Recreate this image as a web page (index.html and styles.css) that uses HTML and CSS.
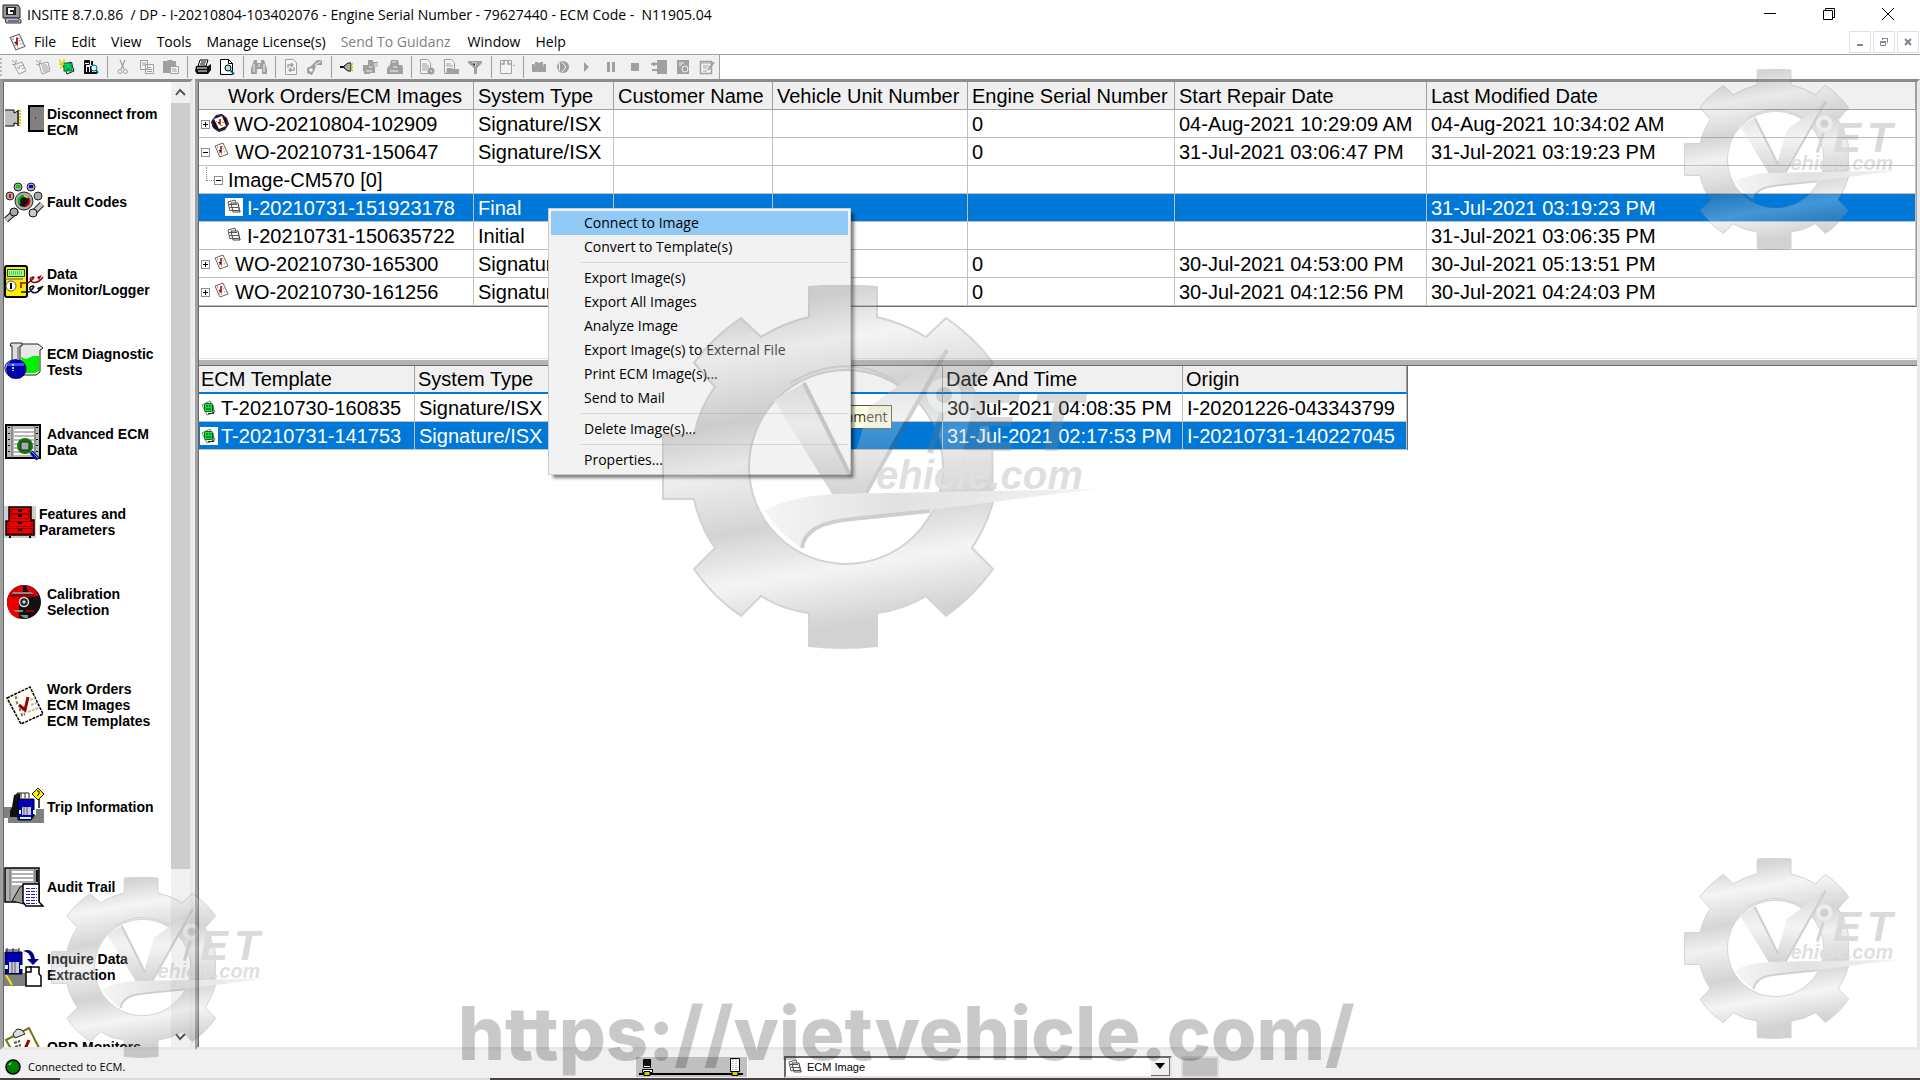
FILE: index.html
```html
<!DOCTYPE html>
<html lang="en">
<head>
<meta charset="utf-8">
<title>INSITE 8.7.0.86</title>
<link rel="stylesheet" href="styles.css">
</head>
<body>
<svg class="defs" width="0" height="0" aria-hidden="true">
  <defs>
    <linearGradient id="steel" x1="0" y1="0" x2="0.15" y2="1">
      <stop offset="0" stop-color="#707070"/><stop offset=".1" stop-color="#7a7a7a"/><stop offset=".22" stop-color="#dedede"/>
      <stop offset=".4" stop-color="#787878"/><stop offset=".52" stop-color="#d2d2d2"/><stop offset=".7" stop-color="#727272"/>
      <stop offset=".84" stop-color="#dedede"/><stop offset="1" stop-color="#6c6c6c"/>
    </linearGradient>
    <linearGradient id="blade" x1="0" y1="0" x2="0" y2="1">
      <stop offset="0" stop-color="#808080"/><stop offset=".5" stop-color="#dadada"/><stop offset="1" stop-color="#707070"/>
    </linearGradient>
    <linearGradient id="swoosh" x1="0" y1="0" x2="1" y2="0">
      <stop offset="0" stop-color="#e0e0e0"/><stop offset=".4" stop-color="#a0a0a0"/><stop offset="1" stop-color="#d8d8d8"/>
    </linearGradient>
    <symbol id="logo" viewBox="0 0 434 364">
      <g opacity=".3">
        <path fill="url(#steel)" stroke="#707070" stroke-width="2" fill-rule="evenodd" d="M147 2Q181-1 215 2V32Q241 38 264 52L284 33Q312 52 331 78L310 102Q324 126 330 150L331 217Q324 242 310 263L331 284Q311 312 284 331L264 311Q241 325 215 328V361Q181 365 147 361V328Q121 325 99 311L79 331Q51 312 32 284L53 263Q38 242 32 214H1V150H32Q38 122 53 102L32 78Q51 52 79 33L99 52Q121 38 147 32ZM184 85A97 97 0 1 0 184 279A97 97 0 1 0 184 85Z"/>
        <path fill="url(#blade)" d="M172 212L112 115L142 98L187 190L207 122L285 65L204 208Z"/>
        <path fill="url(#swoosh)" d="M103 226Q125 212 172 209L434 204L268 225L180 233Q150 238 140 263Q118 250 103 226Z"/>
        <path fill="none" stroke="#606060" stroke-width="4" d="M142 98L189 192M285 65L204 208M268 226L190 234Q143 238 140 263"/>
        <path fill="none" stroke="#707070" stroke-width="2" d="M128 98Q185 65 235 97"/>
        <circle cx="282" cy="110" r="17" fill="#b8c4c6"/><circle cx="282" cy="110" r="8" fill="#666"/>
        <path stroke="#777" stroke-width="6" d="M280 128L268 168"/>
        <text x="300 368" y="166" class="logo-big">ET</text>
        <text x="214" y="204" class="logo-small">ehicle.com</text>
      </g>
    </symbol>
    <symbol id="note" viewBox="0 0 16 16"><path fill="#fff" stroke="#666" stroke-width="1" d="M2 4L10 1L15 12L7 15Z"/><path stroke="#888" stroke-dasharray="1 1" d="M9 5l3-1M10 7l3-1M11 10l3-1M4 6l2-1M6 11l2-1"/><path fill="none" stroke="#a00000" stroke-width="1.500" d="M6 8l2 2V4"/><path fill="#c0b000" d="M4 4h1v1H4zM8 12h1v1H8zM11 3h1v1h-1z"/></symbol>
    <symbol id="note-active" viewBox="0 0 18 18"><path fill="#111" d="M5 1l6-1 5 4 2 6-4 6-6 2-6-4-2-6z"/><path fill="none" stroke="#50206a" d="M5 2l6-1 4 3 2 6-4 5-6 2-5-4-1-6z"/><path fill="#fff" d="M3 5L11 2L15 12L8 15Z"/><path fill="none" stroke="#a00000" stroke-width="1.500" d="M7 8l2 2V5"/><path fill="#c0b000" d="M5 7h1v1H5zM11 8h2v1h-2zM10 11h2v1h-2z"/></symbol>
    <symbol id="pages" viewBox="0 0 16 16"><path fill="#fff" stroke="#555" d="M2 3L9 1L11 9L4 12Z"/><path fill="#fff" stroke="#444" d="M5 4h7l2 9H7Z"/><path stroke="#555" d="M3 5.500h8M4 8.500h8M6 11.500h7M12 6l2 7"/></symbol>
    <symbol id="template" viewBox="0 0 16 16"><path fill="#fff" stroke="#777" d="M1 5L9 1L14 12L6 15Z"/><rect x="3.500" y="3.500" width="8" height="8" rx="1" fill="#10e040" stroke="#087020"/><path stroke="#043a10" d="M5 6h2M8 6h2M5 9h5M12 5v8M7 13.500h6"/></symbol>
    <symbol id="app" viewBox="0 0 20 20"><path fill="#9a9a9a" stroke="#222" d="M1 1h15l2 3v10H1Z"/><path fill="#222" d="M4 3h10v8H4z"/><path fill="none" stroke="#fff" stroke-width="2" d="M12 5H7v4h4"/><path fill="#b9b9c8" stroke="#334" d="M3 14h12l4 2v3H4Z"/><path stroke="#225" d="M6 17h11"/></symbol>
    <symbol id="t-note" viewBox="0 0 16 16"><path fill="#f4f4f4" stroke="#a0a0a0" d="M3 6L11 3L15 12L8 15Z"/><path stroke="#a0a0a0" d="M1 1l4 4M1 5l3 1M5 1v3M6 8l2 2 1-4M10 7l3-1M11 10l2-1" fill="none"/></symbol>
    <symbol id="t-pages" viewBox="0 0 16 16"><path fill="#f4f4f4" stroke="#a0a0a0" d="M4 5l9-2 2 9-8 3Z"/><path stroke="#a0a0a0" d="M1 1l4 4M1 5l3 1M5 1v3M6 6h6M7 8h6M7 10h7M8 12h5" fill="none"/></symbol>
    <symbol id="t-template" viewBox="0 0 16 16"><path fill="#fff" stroke="#111" d="M4 6l8-3 3 9-7 3Z"/><rect x="5" y="4" width="8" height="8" fill="#00d860" stroke="#063"/><path stroke="#063" d="M7 7h1M10 7h1M7 10h4"/><path stroke="#d8d000" stroke-width="1.500" d="M0 1l5 5M0 5l4 1M5 0v4M1 9l3-2"/></symbol>
    <symbol id="t-chart" viewBox="0 0 16 16"><path fill="#fff" stroke="#111" d="M1.500 1.500h5v4h-5z"/><path stroke="#111" stroke-width="2" fill="none" d="M2 6v8h12M5 8v6M8 7v7M1 3h5M9 2v4"/><circle cx="11" cy="9" r="3" fill="#dff" stroke="#067"/><path stroke="#067" stroke-width="2" d="M13 11l2 3"/></symbol>
    <symbol id="t-cut" viewBox="0 0 16 16"><path fill="none" stroke="#a0a0a0" stroke-width="1.300" d="M5 1l4 9M10 1L6 10"/><circle cx="5" cy="12.500" r="2" fill="none" stroke="#a0a0a0"/><circle cx="10.500" cy="12.500" r="2" fill="none" stroke="#a0a0a0"/></symbol>
    <symbol id="t-copy" viewBox="0 0 16 16"><path fill="#f4f4f4" stroke="#a0a0a0" d="M1.500 1.500h7v9h-7zM6.500 5.500h8v9h-8z"/><path stroke="#a0a0a0" d="M3 4h4M3 6h3M8 8.500h4M8 10.500h5M8 12.500h5"/></symbol>
    <symbol id="t-paste" viewBox="0 0 16 16"><path fill="#a0a0a0" d="M0 2h4l1-1h4l1 1h3v12H0z"/><path fill="#f4f4f4" stroke="#a0a0a0" d="M7.500 7.500h8v7h-8z"/><path stroke="#a0a0a0" d="M9 10h4M9 12h5"/></symbol>
    <symbol id="t-print" viewBox="0 0 16 16"><path fill="#fff" stroke="#000" d="M5 1h8l-2 6H3z"/><path stroke="#000" d="M6 3h5M5 5h5"/><path fill="#111" d="M1 7h12l3-2v6l-3 4H2l-2-3z"/><path stroke="#fff" d="M2 9h10M3 12h9"/></symbol>
    <symbol id="t-preview" viewBox="0 0 16 16"><path fill="#fff" stroke="#000" d="M1.500.5h8l4 4v11h-12z"/><path fill="none" stroke="#000" d="M9.500.5v4h4"/><circle cx="9" cy="9" r="3" fill="#bde" stroke="#000"/><path stroke="#067" stroke-width="2" d="M11 11l4 4"/></symbol>
    <symbol id="t-find" viewBox="0 0 16 16"><path fill="#a0a0a0" d="M3 1h3v3h4V1h3l3 9v5h-5v-5H6v5H0v-5z"/><path stroke="#f4f4f4" d="M3 5v8M13 5v8M8 5v3"/></symbol>
    <symbol id="t-refresh" viewBox="0 0 16 16"><path fill="#f4f4f4" stroke="#a0a0a0" d="M2.500.5h8l3 3v12h-11z"/><path fill="none" stroke="#a0a0a0" stroke-width="1.300" d="M5 9V6h5M8 4l2 2-2 2M11 8v3H6M8 9l-2 2 2 2"/></symbol>
    <symbol id="t-wrench" viewBox="0 0 16 16"><path fill="#a0a0a0" d="M0 9l4-2 6-6h5v5H9l-1 4-3 6-5-2z"/><circle cx="4" cy="11" r="1.800" fill="#f4f4f4"/><path stroke="#f4f4f4" d="M8 6l6-4"/></symbol>
    <symbol id="t-plug" viewBox="0 0 16 16"><path stroke="#111" stroke-width="2" d="M1 8h5"/><path fill="#aaa" stroke="#111" d="M5 7l4-3h3v8H9L5 9z"/><path stroke="#d8d000" stroke-width="2" stroke-dasharray="2 1" d="M13 4v9"/></symbol>
    <symbol id="t-truck" viewBox="0 0 16 16"><path fill="#a0a0a0" d="M5 1h5v2h5v5h-3v6H7v1H1v-3H0V6h5z"/><path stroke="#f4f4f4" d="M11 5h4M11 7h4M6 8h3M3 12h6"/></symbol>
    <symbol id="t-disk" viewBox="0 0 16 16"><path fill="#a0a0a0" d="M4 1h7l1 5h3l1 3v6H0V9l3-3z"/><path stroke="#f4f4f4" d="M5 3h4M6 8h4M3 12h8"/></symbol>
    <symbol id="t-doc" viewBox="0 0 16 16"><path fill="#f4f4f4" stroke="#a0a0a0" d="M1.500.5h7l3 3v11h-10z"/><path stroke="#a0a0a0" d="M3 5h5M3 7h7M3 9h7M3 11h5"/><circle cx="12" cy="12" r="3.500" fill="#a0a0a0"/><path stroke="#f4f4f4" d="M11 11l2 2"/></symbol>
    <symbol id="t-docopen" viewBox="0 0 16 16"><path fill="#f4f4f4" stroke="#a0a0a0" d="M1.500.5h7l3 3v11h-10z"/><path stroke="#a0a0a0" d="M3 5h5M3 7h7"/><path fill="#a0a0a0" d="M4 9h5l1 1h6v5H3z"/></symbol>
    <symbol id="t-filter" viewBox="0 0 16 16"><path fill="#a0a0a0" d="M1 2h14v2l-5 5v6H7V9L1 4z"/><path stroke="#f4f4f4" d="M5 4h4l-1 3"/></symbol>
    <symbol id="t-window" viewBox="0 0 16 16"><path fill="#f4f4f4" stroke="#a0a0a0" d="M1.500 1.500h11v13h-11z"/><path stroke="#a0a0a0" stroke-width="1.500" d="M2 5h3V2M9 2v3h3M15 6v1" fill="none"/></symbol>
    <symbol id="t-camera" viewBox="0 0 16 16"><path fill="#a0a0a0" d="M1 5h3V3h3v1h2V3h3v2h3v8H1z"/><path stroke="#f4f4f4" d="M3 6h1M12 6h1"/></symbol>
    <symbol id="t-record" viewBox="0 0 16 16"><circle cx="8" cy="8" r="6" fill="#a0a0a0"/><path fill="none" stroke="#f4f4f4" d="M7 3l4 5-4 5M4.500 4v8"/></symbol>
    <symbol id="t-play" viewBox="0 0 16 16"><path fill="#a0a0a0" d="M5 3l5 5-5 5z"/></symbol>
    <symbol id="t-pause" viewBox="0 0 16 16"><path fill="#a0a0a0" d="M4 3h3v10H4zM9 3h3v10H9z"/></symbol>
    <symbol id="t-stop" viewBox="0 0 16 16"><path fill="#a0a0a0" d="M4 4h8v8H4z"/></symbol>
    <symbol id="t-import" viewBox="0 0 16 16"><path fill="#a0a0a0" d="M6 1h10v14H6z"/><path stroke="#a0a0a0" stroke-width="2" d="M0 5h6M1 11h5M3 3v4"/></symbol>
    <symbol id="t-sched" viewBox="0 0 16 16"><path fill="#a0a0a0" d="M2 1h12v14H2z"/><path stroke="#f4f4f4" d="M4 4h5M4 6h3"/><circle cx="10" cy="10" r="3" fill="#a0a0a0" stroke="#f4f4f4"/></symbol>
    <symbol id="t-edit" viewBox="0 0 16 16"><path fill="#f4f4f4" stroke="#a0a0a0" stroke-width="1.500" d="M1.500 2.500h11v12h-11z"/><path stroke="#a0a0a0" d="M2 4h10M4 7h6M4 9h4M4 12h4"/><path stroke="#a0a0a0" stroke-width="2" d="M15 3l-6 8"/></symbol>
  </defs>
</svg>

<header class="titlebar">
  <svg class="app-icon"><use href="#app"/></svg>
  <span class="title">INSITE 8.7.0.86&nbsp; / DP - I-20210804-103402076 - Engine Serial Number - 79627440 - ECM Code -&nbsp; N11905.04</span>
  <div class="win-controls">
    <button aria-label="Minimize"><svg width="12" height="12"><path stroke="#000" d="M0 5.500h12"/></svg></button>
    <button aria-label="Restore"><svg width="12" height="12"><path fill="none" stroke="#000" d="M.5 2.500h9v9h-9zM2.500 2.500v-2h9v9h-2"/></svg></button>
    <button aria-label="Close"><svg width="12" height="12"><path stroke="#000" d="M0 0l12 12M12 0L0 12"/></svg></button>
  </div>
</header>

<nav class="menubar" aria-label="Main menu">
  <svg class="doc-icon"><use href="#note"/></svg>
  <button>File</button><button>Edit</button><button>View</button><button>Tools</button><button>Manage License(s)</button><button disabled>Send To Guidanz</button><button>Window</button><button>Help</button>
  <div class="mdi">
    <button aria-label="Minimize document"><svg width="10" height="10"><path stroke="#7b8794" stroke-width="2" d="M2 8h6"/></svg></button>
    <button aria-label="Restore document"><svg width="10" height="10"><path fill="none" stroke="#7b8794" d="M1.500 5.500h5v3h-5zM1 4.500h6M3.500 3V1.500h5v4H8M3 1.500h6"/></svg></button>
    <button aria-label="Close document"><svg width="10" height="10"><path stroke="#7b8794" stroke-width="2" d="M2 2l6 6M8 2l-6 6"/></svg></button>
  </div>
</nav>

<div class="toolrow">
  <div class="toolbar" role="toolbar" aria-label="Standard">
    <span class="grip"></span>
    <button aria-label="New work order"><svg><use href="#t-note"/></svg></button><button aria-label="New image"><svg><use href="#t-pages"/></svg></button><button aria-label="New template"><svg><use href="#t-template"/></svg></button><button aria-label="Report"><svg><use href="#t-chart"/></svg></button>
    <span class="sep"></span>
    <button aria-label="Cut"><svg><use href="#t-cut"/></svg></button><button aria-label="Copy"><svg><use href="#t-copy"/></svg></button><button aria-label="Paste"><svg><use href="#t-paste"/></svg></button>
    <span class="sep"></span>
    <button aria-label="Print"><svg><use href="#t-print"/></svg></button><button aria-label="Print preview"><svg><use href="#t-preview"/></svg></button>
    <span class="sep"></span>
    <button aria-label="Find"><svg><use href="#t-find"/></svg></button>
    <span class="sep"></span>
    <button aria-label="Refresh"><svg><use href="#t-refresh"/></svg></button><button aria-label="Adjust"><svg><use href="#t-wrench"/></svg></button>
    <span class="sep"></span>
    <button aria-label="Connect"><svg><use href="#t-plug"/></svg></button><button aria-label="Send to ECM"><svg><use href="#t-truck"/></svg></button><button aria-label="Save"><svg><use href="#t-disk"/></svg></button>
    <span class="sep"></span>
    <button aria-label="Document"><svg><use href="#t-doc"/></svg></button><button aria-label="Open"><svg><use href="#t-docopen"/></svg></button><button aria-label="Filter"><svg><use href="#t-filter"/></svg></button>
    <span class="sep"></span>
    <button aria-label="Layout"><svg><use href="#t-window"/></svg></button>
    <span class="sep"></span>
    <button aria-label="Snapshot"><svg><use href="#t-camera"/></svg></button><button aria-label="Record"><svg><use href="#t-record"/></svg></button><button aria-label="Play"><svg><use href="#t-play"/></svg></button><button aria-label="Pause"><svg><use href="#t-pause"/></svg></button><button aria-label="Stop"><svg><use href="#t-stop"/></svg></button><button aria-label="Import"><svg><use href="#t-import"/></svg></button><button aria-label="Schedule"><svg><use href="#t-sched"/></svg></button><button aria-label="Edit log"><svg><use href="#t-edit"/></svg></button>
  </div>
</div>

<div class="workspace">
  <aside class="sidebar">
    <nav class="side-list" aria-label="Functions">
      <a href="#"><svg viewBox="0 0 40 40"><path fill="#c0c0c0" stroke="#000" d="M1 8h9v3l4-2v13l-4-1v3H1"/><path stroke="#444" stroke-width="2" d="M14 8v16"/><path stroke="#d8d000" stroke-width="2" stroke-dasharray="2 1" d="M16 8v16"/><path fill="#808080" stroke="#000" stroke-width="2" d="M40 4H25v25h15"/><path fill="#c00" d="M31 15h1v2h-1z"/></svg><span>Disconnect from ECM</span></a>
      <a href="#"><svg viewBox="0 0 40 40"><g stroke="#222" fill="#aaa"><circle cx="14" cy="5" r="4"/><circle cx="27" cy="5" r="4"/><circle cx="6" cy="14" r="4"/><circle cx="34" cy="14" r="4"/><circle cx="20" cy="19" r="9"/></g><path fill="#0c0" d="M12 3h4v3h-4z"/><path fill="#00e" d="M25 3h4v3h-4z"/><path fill="#e00" d="M5 12h2v4H5z"/><circle cx="20" cy="19" r="6" fill="#111"/><path fill="none" stroke="#0b0" stroke-width="2" d="M16 22a5 5 0 0 1 4-8"/><path fill="none" stroke="#dd0" stroke-width="2" d="M20 14a5 5 0 0 1 4 2"/><path fill="none" stroke="#d00" stroke-width="2" d="M25 17a5 5 0 0 1-4 7"/><path stroke="#111" stroke-width="6" d="M2 38L13 28M27 33L38 22"/><path stroke="#c4c4c4" stroke-width="4" d="M2 38L13 28M27 33L38 22"/><circle cx="10" cy="30" r="4" fill="#aaa" stroke="#111"/><circle cx="29" cy="31" r="4" fill="#ccc" stroke="#111"/></svg><span>Fault Codes</span></a>
      <a href="#"><svg viewBox="0 0 40 40"><rect x="1" y="4" width="22" height="31" rx="2" fill="#ffee00" stroke="#000" stroke-width="2"/><path fill="#9f9" stroke="#333" d="M3.500 7.500h17v7h-17z"/><path stroke="#0a0" stroke-dasharray="1 1" d="M5 10h14M5 12h14"/><path stroke="#555" d="M1 17h18"/><circle cx="7" cy="24" r="5" fill="#fff" stroke="#555"/><path stroke="#000" stroke-width="2" d="M7 21v6"/><path fill="none" stroke="#900000" stroke-width="1.500" d="M17 26v-5h7q8-6 5-6-5 1-1 5 6 2 11-5"/><path fill="none" stroke="#111" stroke-width="1.500" d="M17 30h8q7-6 4-6-6 1-1 6 5 3 11-6"/><path fill="#900000" d="M33 15l5-2-3 5z"/><path fill="#111" d="M33 26l5-2-3 5z"/></svg><span>Data Monitor/Logger</span></a>
      <a href="#"><svg viewBox="0 0 40 40"><path fill="#e8e8e8" stroke="#222" d="M15 2h19l5 4-3 2v22l-4 3H18"/><path fill="#00f000" d="M17 15l5 2 7-3h6v15l-4 2H20z"/><path fill="#ddd" stroke="#222" d="M7 1h11v3h-2v14q6 3 6 9t-6 9H8q-6-3-7-9t7-9V4H6z"/><circle cx="12" cy="27" r="10" fill="#0000a8"/><path fill="#3a50ff" d="M3 21h17v3H3z"/><path stroke="#9df" stroke-width="2" stroke-dasharray="2 1" d="M9 22v7"/><path stroke="#999" stroke-width="2" d="M14 5v13"/></svg><span>ECM Diagnostic Tests</span></a>
      <a href="#"><svg viewBox="0 0 40 40"><path fill="#b8b8b8" stroke="#000" stroke-width="2" d="M2 3h34v33H2z"/><path stroke="#000" stroke-dasharray="1 5" d="M5 5v30M33 5v30" stroke-width="2"/><path stroke="#666" d="M8 4v32M31 4v32"/><path stroke="#fff" stroke-width="2" d="M10 8h20M10 12h20M10 16h20M10 20h20M10 24h20M10 28h20M10 32h20"/><circle cx="21" cy="24" r="8" fill="#0a7a0a"/><path fill="#aaa" stroke="#222" d="M17 20h8v8h-8z"/><path stroke="#0010a0" stroke-width="4" d="M27 30l7 7"/><path stroke="#4af" d="M28 30l6 6"/></svg><span>Advanced ECM Data</span></a>
      <a href="#" class="narrow"><svg viewBox="0 0 32 40"><path fill="#d0d0d0" d="M0 4h32v32H0z"/><path fill="#f00000" stroke="#000" stroke-width="1.500" d="M5 5h22v13h3v15H2V19h3z"/><path fill="none" stroke="#800" d="M7 7.500h18v4H7zM7 12.500h18v4H7zM4 19.500h24v5H4zM4 26.500h24v5H4z"/><path stroke="#000" stroke-width="2" d="M14 9h4M14 14h4M14 21h4M14 28h4M6 34v2M26 34v2"/></svg><span>Features and Parameters</span></a>
      <a href="#"><svg viewBox="0 0 40 40"><circle cx="20" cy="20" r="17" fill="#111"/><path fill="#e80000" d="M19 3v13l-4 5v16Q3 33 3 20 4 6 19 3zM22 3q9 2 13 11l-9 1z"/><path fill="#888" d="M9 10h18l3 2H8zM9 28h10v2H12zM16 33h8v3h-4z"/><path fill="#900" d="M6 12h24v3H6zM22 28h8v2h-8z"/><circle cx="20" cy="20" r="4.500" fill="#222" stroke="#ddd" stroke-width="1.500"/><path stroke="#fff" d="M18 20h4M20 18v4"/></svg><span>Calibration Selection</span></a>
      <a href="#" class="tall"><svg viewBox="0 0 40 40"><path fill="#fffff4" stroke="#000" stroke-width="1.500" stroke-dasharray="3 1" d="M3 13L26 2L39 29L17 39Z"/><path stroke="#777" stroke-width="3" stroke-dasharray="2 1" d="M11 13l3-1M12 18l3-1M15 25l4-1M17 30l4-1"/><path stroke="#bbb" stroke-width="2" stroke-dasharray="3 1" d="M26 15l5-2M27 20l6-2M24 27l10-4"/><path fill="none" stroke="#980000" stroke-width="3" d="M15 20l6 5 3-13"/></svg><span>Work Orders<br>ECM Images<br>ECM Templates</span></a>
      <a href="#"><svg viewBox="0 0 40 40"><path fill="#808080" d="M0 20h8v8h24v-6h8v14H4v-5H0z"/><path fill="#111" d="M10 8l6-2v24H6v-6l2-4z"/><path fill="none" stroke="#222" d="M13 11V6h12v5M17 6v5M21 6v5"/><path fill="#0000b8" stroke="#000" d="M14 12h16v17l-3 4H14z"/><path fill="#ccc" d="M18 20h9v8h-9z"/><path stroke="#557" d="M20 20v8M23 20v8"/><path fill="#cff" d="M15 23h2v4h-2zM29 23h2v4h-2zM16 30h11v2H16z"/><path stroke="#111" stroke-width="1.500" d="M35 12v9"/><path fill="#fff000" stroke="#111" d="M34 1l6 6-6 6-6-6z"/><path fill="none" stroke="#111" d="M33 9l2-2V4h-2"/></svg><span>Trip Information</span></a>
      <a href="#"><svg viewBox="0 0 40 40"><path fill="#b0b0b0" stroke="#000" stroke-width="1.500" d="M1 1h34v34H1z"/><path stroke="#666" d="M6 2v33M31 2v20"/><path stroke="#fff" stroke-width="2" d="M8 5h21M8 9h21M8 13h21M8 17h12"/><path stroke="#111" d="M33 3v12" stroke-width="2"/><path fill="#999" stroke="#111" d="M8 34l8-14 8-3-4 20z"/><path fill="#fff" stroke="#000" stroke-width="1.500" d="M19 17h16v18l4 4H22l-3-4z"/><path stroke="#2020d0" stroke-width="1" stroke-dasharray="4 1" d="M22 21.500h11M22 24.500h11M22 27.500h11M22 30.500h11M22 33.500h11M22 36.500h11"/></svg><span>Audit Trail</span></a>
      <a href="#"><svg viewBox="0 0 40 40"><path fill="#808080" d="M0 26h24v13H0z"/><path fill="none" stroke="#222" d="M3 6V1M9 6V1M15 6V1M1 3h14"/><path fill="#0000b0" stroke="#000" d="M1 5h17v22H1z"/><path fill="#ccc" d="M5 15h10v11H5z"/><path stroke="#557" d="M8 15v11M11 15v11"/><path fill="#cff" d="M1 18h3v4H1zM16 18h3v4h-3z"/><path stroke="#ffe800" stroke-width="2" d="M2 28l6 10"/><path fill="#00008b" d="M19 4q10-4 12 8h4l-6 6-6-6h4q-1-7-8-8z"/><path fill="#fff" stroke="#000" stroke-width="1.500" d="M26 20h9v7l2 2v10H22V26z"/><path fill="#fff" stroke="#000" stroke-width="1.500" d="M22 20h5v5h-5z"/></svg><span>Inquire Data Extraction</span></a>
      <a href="#"><svg viewBox="0 0 40 40"><path fill="#fffff4" stroke="#777020" stroke-width="2" d="M2 13L25 1L39 29L17 39Z"/><path fill="#ddd" stroke="#222" d="M9 7l4-5 5 1 3 4-10 4z"/><path stroke="#555" stroke-width="2" stroke-dasharray="3 1" d="M10 16l6-2M11 20l6-2"/><path fill="none" stroke="#980000" stroke-width="3" d="M21 22l4-9"/></svg><span>OBD Monitors</span></a>
    </nav>
    <div class="scrollbar" aria-hidden="true">
      <svg width="11" height="21"><path fill="none" stroke="#555" stroke-width="2" d="M1 13l4-5 5 5"/></svg>
      <div class="track"><div class="thumb"></div></div>
      <svg width="11" height="21"><path fill="none" stroke="#555" stroke-width="2" d="M1 8l4 5 5-5"/></svg>
    </div>
  </aside>

  <main class="main">
    <section class="orders">
      <table class="grid">
        <colgroup><col class="w-name"><col class="w-type"><col class="w-cust"><col class="w-unit"><col class="w-serial"><col class="w-start"><col></colgroup>
        <thead><tr><th class="tree-head">Work Orders/ECM Images</th><th>System Type</th><th>Customer Name</th><th>Vehicle Unit Number</th><th>Engine Serial Number</th><th>Start Repair Date</th><th>Last Modified Date</th></tr></thead>
        <tbody>
          <tr><td><div class="node"><i class="box plus"></i><svg class="big"><use href="#note-active"/></svg>WO-20210804-102909</div></td><td>Signature/ISX</td><td></td><td></td><td>0</td><td>04-Aug-2021 10:29:09 AM</td><td>04-Aug-2021 10:34:02 AM</td></tr>
          <tr><td><div class="node"><i class="box"></i><svg><use href="#note"/></svg>WO-20210731-150647</div></td><td>Signature/ISX</td><td></td><td></td><td>0</td><td>31-Jul-2021 03:06:47 PM</td><td>31-Jul-2021 03:19:23 PM</td></tr>
          <tr><td><div class="node"><i class="elbow"></i><i class="box"></i><span>Image-CM570 [0]</span></div></td><td></td><td></td><td></td><td></td><td></td><td></td></tr>
          <tr class="selected"><td><div class="node leaf"><svg><use href="#pages"/></svg>I-20210731-151923178</div></td><td>Final</td><td></td><td></td><td></td><td></td><td>31-Jul-2021 03:19:23 PM</td></tr>
          <tr><td><div class="node leaf"><svg><use href="#pages"/></svg>I-20210731-150635722</div></td><td>Initial</td><td></td><td></td><td></td><td></td><td>31-Jul-2021 03:06:35 PM</td></tr>
          <tr><td><div class="node"><i class="box plus"></i><svg><use href="#note"/></svg>WO-20210730-165300</div></td><td>Signature/ISX</td><td></td><td></td><td>0</td><td>30-Jul-2021 04:53:00 PM</td><td>30-Jul-2021 05:13:51 PM</td></tr>
          <tr><td><div class="node"><i class="box plus"></i><svg><use href="#note"/></svg>WO-20210730-161256</div></td><td>Signature/ISX</td><td></td><td></td><td>0</td><td>30-Jul-2021 04:12:56 PM</td><td>30-Jul-2021 04:24:03 PM</td></tr>
        </tbody>
      </table>
    </section>
    <div class="splitter"></div>
    <section class="templates">
      <table class="grid fixed">
        <colgroup><col class="w-tname"><col class="w-ttype"><col class="w-comment"><col class="w-date"><col class="w-origin"></colgroup>
        <thead><tr><th>ECM Template</th><th>System Type</th><th></th><th>Date And Time</th><th>Origin</th></tr></thead>
        <tbody>
          <tr><td><div class="node tpl"><svg><use href="#template"/></svg>T-20210730-160835</div></td><td>Signature/ISX</td><td></td><td>30-Jul-2021 04:08:35 PM</td><td>I-20201226-043343799</td></tr>
          <tr class="selected"><td><div class="node tpl"><svg><use href="#template"/></svg>T-20210731-141753</div></td><td>Signature/ISX</td><td></td><td>31-Jul-2021 02:17:53 PM</td><td>I-20210731-140227045</td></tr>
        </tbody>
      </table>
    </section>
  </main>
</div>

<footer class="status">
  <svg class="led" width="16" height="16"><circle cx="8" cy="8" r="7" fill="#008000" stroke="#000" stroke-width="1.500"/><path stroke="#6f6" stroke-width="1.500" d="M4 6l2-2"/></svg>
  <span class="status-text">Connected to ECM.</span>
  <div class="link"><svg width="108" height="20"><path fill="#fff" stroke="#000" d="M7.500 2.500h7v8h-7zM6.500 12.500h10v3h-10zM94.500 1.500h9v13h-9z"/><path fill="#111" d="M8 3h6v6H8z"/><path stroke="#888" stroke-dasharray="1 1" d="M97 2v12M100 2v12"/><path stroke="#000" stroke-width="2" d="M3 17h104"/><path fill="#d8d000" stroke="#000" d="M8 14.500h6v4H8zM96 14.500h6v4h-6z"/></svg></div>
  <div class="combo">
    <svg class="combo-icon"><use href="#pages"/></svg>
    <select aria-label="Data source"><option>ECM Image</option></select>
    <span class="arrow"></span>
  </div>
  <div class="well"></div>
</footer>
<div class="taskline"><span class="dark short"></span><span class="light"></span><span class="dark"></span></div>

<div class="tooltip" role="tooltip">Comment</div>
<div class="context" role="menu">
  <button role="menuitem" class="hot">Connect to Image</button>
  <button role="menuitem">Convert to Template(s)</button>
  <hr>
  <button role="menuitem">Export Image(s)</button>
  <button role="menuitem">Export All Images</button>
  <button role="menuitem">Analyze Image</button>
  <button role="menuitem">Export Image(s) to External File</button>
  <button role="menuitem">Print ECM Image(s)...</button>
  <button role="menuitem">Send to Mail</button>
  <hr>
  <button role="menuitem">Delete Image(s)...</button>
  <hr>
  <button role="menuitem">Properties...</button>
</div>

<svg class="mark mark-center"><use href="#logo"/></svg>
<svg class="mark mark-tr"><use href="#logo"/></svg>
<svg class="mark mark-br"><use href="#logo"/></svg>
<svg class="mark mark-bl"><use href="#logo"/></svg>
<div class="url-mark">https://vietvehicle.com/</div>
</body>
</html>
```
FILE: styles.css
```css
* { box-sizing: border-box; }
body {
  margin: 0;
  height: 100vh;
  display: flex;
  flex-direction: column;
  position: relative;
  overflow: hidden;
  background: #fff;
  color: #000;
  font: 14px/20px "Open Sans", "Noto Sans", sans-serif;
}
button { border: 0; padding: 0; margin: 0; background: none; font: inherit; color: inherit; }
.defs { position: absolute; }

.titlebar { display: flex; align-items: center; height: 28px; flex: none; padding-left: 2px; }
.app-icon { width: 20px; height: 20px; margin-right: 5px; }
.title { flex: 1; white-space: nowrap; padding-top: 2px; }
.win-controls { display: flex; padding-right: 3px; }
.win-controls button { width: 59px; height: 28px; display: grid; place-items: center; }

.menubar { display: flex; align-items: center; height: 26px; flex: none; padding: 1px 1px 0 8px; }
.doc-icon { width: 18px; height: 20px; margin-right: 8px; }
.menubar > button { margin-right: 15px; white-space: nowrap; }
.menubar > button:disabled { color: #808080; margin-right: 17px; }
.mdi { display: flex; gap: 2px; margin-left: auto; }
.mdi button { width: 22px; height: 22px; border: 1px solid #e0e0e0; display: grid; place-items: center; }

.toolrow { flex: none; height: 25px; border-top: 1px solid #a0a0a0; display: flex; }
.toolbar { display: flex; align-items: center; background: #f0f0f0; border-right: 1px solid #a0a0a0; }
.grip { width: 7px; height: 18px; border-left: 2px dotted #b8b8b8; }
.toolbar button { width: 24px; height: 22px; display: grid; place-items: center; }
.toolbar svg { width: 16px; height: 16px; }
.sep { width: 8px; height: 22px; background: linear-gradient(#a0a0a0, #a0a0a0) center / 1px 100% no-repeat; }

.workspace { flex: 1; min-height: 0; display: flex; gap: 2px; background: #f0f0f0; }
.sidebar, .main {
  border: 3px solid;
  border-color: #8c8c8c #e8e8e8 #e8e8e8 #a0a0a0;
  box-shadow: inset 1px 0 #696969;
  background: #fff;
}
.sidebar { width: 193px; flex: none; display: flex; padding-left: 1px; }
.side-list { flex: 1; min-width: 0; overflow: hidden; }
.side-list a {
  display: flex; align-items: center; gap: 3px; height: 80px;
  color: #000; text-decoration: none; font: bold 14px/16px "Liberation Sans", Arial, sans-serif;
}
.side-list a.tall { height: 125px; }
.side-list svg { width: 40px; height: 40px; flex: none; }
.side-list .narrow svg { width: 32px; }
.side-list span { width: 112px; }
.scrollbar { width: 19px; flex: none; background: #f0f0f0; display: flex; flex-direction: column; align-items: center; }
.track { flex: 1; width: 100%; }
.thumb { height: 83%; background: #cdcdcd; }

.main { flex: 1; min-width: 0; display: flex; flex-direction: column; padding-left: 1px; }
.orders { flex: none; height: 277px; border-bottom: 1px solid #e3e3e3; }
.splitter { flex: none; height: 7px; background: #b4b4b4; border-top: 1px solid #fff; border-bottom: 1px solid #696969; }
.templates { flex: 1; }

.grid {
  width: 100%; table-layout: fixed; border-collapse: separate; border-spacing: 0;
  border-bottom: 1px solid #696969; border-right: 1px solid #a0a0a0;
  font: 20px/26px "Liberation Sans", Arial, sans-serif; white-space: nowrap;
}
.grid th {
  height: 28px; padding: 1px 0 0 4px; text-align: left; font-weight: normal; background: #f0f0f0;
  border-right: 1px solid #a0a0a0; border-bottom: 1px solid #a0a0a0; overflow: hidden;
}
.grid td { height: 28px; padding: 1px 0 0 4px; border-right: 1px solid #c0c0c0; border-bottom: 1px solid #c0c0c0; overflow: hidden; }
.grid td:first-child { padding-left: 0; }
.grid .tree-head { padding-left: 29px; }
.grid .selected td { background: #0078d7; color: #fff; }
.w-name { width: 275px; } .w-type { width: 140px; } .w-cust { width: 159px; } .w-unit { width: 195px; }
.w-serial { width: 207px; } .w-start { width: 252px; }
.fixed { width: 1209px; border-bottom: 0; border-right-color: #696969; }
.fixed th { height: 28px; padding: 0 0 0 3px; line-height: 24px; border-bottom: 2px solid #0078d7; }
.fixed th:first-child { padding-left: 2px; }
.fixed td { padding-top: 0; }
.w-tname { width: 216px; } .w-ttype { width: 145px; } .w-comment { width: 383px; } .w-date { width: 240px; }

.node { display: flex; align-items: center; height: 26px; padding-left: 2px; }
.node svg { width: 16px; height: 16px; margin: 0 6px 4px 3px; flex: none; }
.node svg.big { width: 18px; height: 18px; margin: 0 5px 2px 1px; }
.box { width: 9px; height: 9px; border: 1px solid #909090; flex: none; background: linear-gradient(#000, #000) center / 5px 1px no-repeat; }
.plus { background: linear-gradient(#000, #000) center / 5px 1px no-repeat, linear-gradient(#000, #000) center / 1px 5px no-repeat; }
.elbow { width: 8px; height: 14px; margin: 0 0 13px 5px; border-left: 1px dotted #909090; border-bottom: 1px dotted #909090; flex: none; }
.node span { margin-left: 5px; }
.leaf { padding-left: 26px; }
.node.leaf svg { width: 18px; height: 18px; margin: 0 4px 2px 0; padding: 1px; background: #fff; }
.tpl { padding-left: 1px; }
.node.tpl svg { width: 18px; height: 18px; margin: 0 3px 0 0; padding: 1px; background: #fff; }

.status { flex: none; height: 28px; display: flex; align-items: center; background: #f0f0f0; padding: 5px 0 0 5px; }
.status-text { width: 608px; margin-left: 7px; font-size: 11px; line-height: 16px; }
.link { width: 112px; height: 20px; background: #c0c0c0; border-right: 1px solid #fff; }
.combo { width: 388px; height: 22px; margin-left: 36px; display: flex; align-items: center; background: #fff; border: 2px solid; border-color: #696969 #e3e3e3 #e3e3e3 #696969; }
.combo-icon { width: 16px; height: 16px; margin: 0 1px; flex: none; }
.combo select { flex: 1; min-width: 0; height: 18px; appearance: none; border: 0; background: #fff; color: #000; padding: 0 3px; font: 11px/18px "Liberation Sans", Arial, sans-serif; }
.arrow { width: 19px; height: 18px; background: #f0f0f0; border-right: 1px solid #696969; border-bottom: 1px solid #696969; display: grid; place-items: center; }
.arrow::after { content: ""; border: 5px solid transparent; border-top: 6px solid #000; border-bottom: 0; }
.well { width: 38px; height: 22px; margin-left: 9px; background: #c0c0c0; border: 2px solid #dcdcdc; }
.taskline { flex: none; height: 2px; display: flex; }
.dark { flex: 1; background: #464243; }
.dark.short { flex: none; width: 60px; }
.light { width: 430px; background: #dcdcdc; }

.tooltip { position: absolute; left: 819px; top: 405px; height: 24px; padding: 0 3px; background: #ffffe1; border: 1px solid #555; font-size: 14px; line-height: 22px; color: #333; }
.context { position: absolute; left: 548px; top: 208px; width: 303px; padding: 2px; background: #f2f2f2; border: 1px solid #ccc; box-shadow: 4px 4px 3px -1px rgba(0, 0, 0, .5); font-size: 14px; }
.context button { display: block; width: 100%; height: 24px; padding-left: 33px; text-align: left; }
.context .hot { background: #91c9f7; }
.context hr { height: 1px; margin: 3px 0 3px 30px; border: 0; background: #d7d7d7; }

.mark { position: absolute; width: 216px; height: 181px; pointer-events: none; }
.mark-center { left: 662px; top: 285px; width: 434px; height: 364px; }
.mark-tr { right: 20px; top: 69px; }
.mark-br { right: 20px; bottom: 41px; }
.mark-bl { left: 51px; bottom: 22px; }
.logo-big { font: bold italic 84px "Liberation Sans", Arial, sans-serif; fill: #888; }
.logo-small { font: bold italic 40px "Liberation Sans", Arial, sans-serif; fill: #999; }
.url-mark { position: absolute; left: 458px; bottom: 2px; font: 800 74px/90px Inter, sans-serif; color: rgba(0, 0, 0, .21); white-space: nowrap; pointer-events: none; }
```
